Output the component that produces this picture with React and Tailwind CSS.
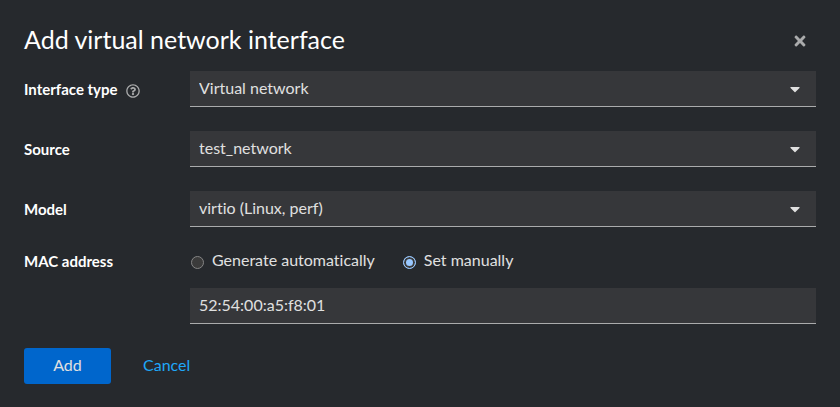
import { useState } from "react";
import { FaCaretDown, FaRegQuestionCircle, FaTimes } from "react-icons/fa";

const fields = [
  { id: "type", label: "Interface type", help: true, options: ["Virtual network", "Bridge to LAN", "Direct attachment"] },
  { id: "source", label: "Source", options: ["test_network", "default"] },
  { id: "model", label: "Model", options: ["virtio (Linux, perf)", "e1000e (PCI)", "rtl8139 (PCI, legacy)"] },
];

const rowClass = "grid grid-cols-[150px_1fr] gap-x-4";
const labelClass = "text-[15px] leading-5 font-bold text-white";
const controlClass =
  "block h-9 w-full appearance-none rounded-none border-b border-[#aaabac] bg-[#36373a] px-[9px] pb-[2px] text-base leading-6 text-[#e0e0e0] outline-none";

function SelectField({ id, label, help, options }) {
  return (
    <div className={rowClass}>
      <div className="flex items-center gap-2">
        <label htmlFor={id} className={labelClass}>{label}</label>
        {help && (
          <button type="button" aria-label="More info" className="mt-1 text-[#aaabac]">
            <FaRegQuestionCircle className="size-[14px]" />
          </button>
        )}
      </div>
      <div className="relative">
        <select id={id} className={controlClass}>
          {options.map((o) => <option key={o}>{o}</option>)}
        </select>
        <FaCaretDown className="pointer-events-none absolute top-[10px] right-[13px] size-4 text-[#e0e0e0]" />
      </div>
    </div>
  );
}

function Radio({ id, label, checked, onChange }) {
  return (
    <div className="flex items-center gap-2">
      <input
        id={id}
        type="radio"
        name="mac-mode"
        checked={checked}
        onChange={onChange}
        className="mt-[2px] size-[13px] appearance-none rounded-full border border-[#858585] bg-[#3b3b3b] checked:border-[#99c8ff] checked:bg-[#99c8ff] checked:shadow-[inset_0_0_0_2px_#3b3b3b]"
      />
      <label htmlFor={id} className="pb-[2px] text-base leading-6 text-[#e0e0e0]">{label}</label>
    </div>
  );
}

export default function App() {
  const [manual, setManual] = useState(true);
  const [mac, setMac] = useState("52:54:00:a5:f8:01");
  return (
    <div role="dialog" aria-labelledby="title" className="min-h-screen bg-[#26292d] px-6 pt-[23px] pb-5 font-['Lato',sans-serif] [font-variant-ligatures:none]">
      <header className="flex items-center justify-between pr-2">
        <h1 id="title" className="text-[25px] leading-8 text-white">Add virtual network interface</h1>
        <button type="button" aria-label="Close" className="mt-1 text-[#aaabac]">
          <FaTimes className="size-4" />
        </button>
      </header>
      <form className="mt-4" onSubmit={(e) => e.preventDefault()}>
        <div className="flex flex-col gap-6">
          {fields.map((f) => <SelectField key={f.id} {...f} />)}
          <div className={rowClass}>
            <label htmlFor="mac" className={labelClass}>MAC address</label>
            <div className="flex flex-col gap-[14px]">
              <div role="radiogroup" aria-label="MAC address" className="-mt-[3px] flex gap-7 pl-px">
                <Radio id="auto" label="Generate automatically" checked={!manual} onChange={() => setManual(false)} />
                <Radio id="manual" label="Set manually" checked={manual} onChange={() => setManual(true)} />
              </div>
              <input id="mac" value={mac} onChange={(e) => setMac(e.target.value)} className={controlClass} />
            </div>
          </div>
        </div>
        <footer className="mt-6 flex gap-4">
          <button type="submit" className="h-9 w-[87px] rounded-[3px] bg-[#0066cc] pb-[2px] text-base text-[#e0e0e0]">Add</button>
          <button type="button" className="h-9 px-4 pb-[2px] text-base text-[#1fa7f8]">Cancel</button>
        </footer>
      </form>
    </div>
  );
}
